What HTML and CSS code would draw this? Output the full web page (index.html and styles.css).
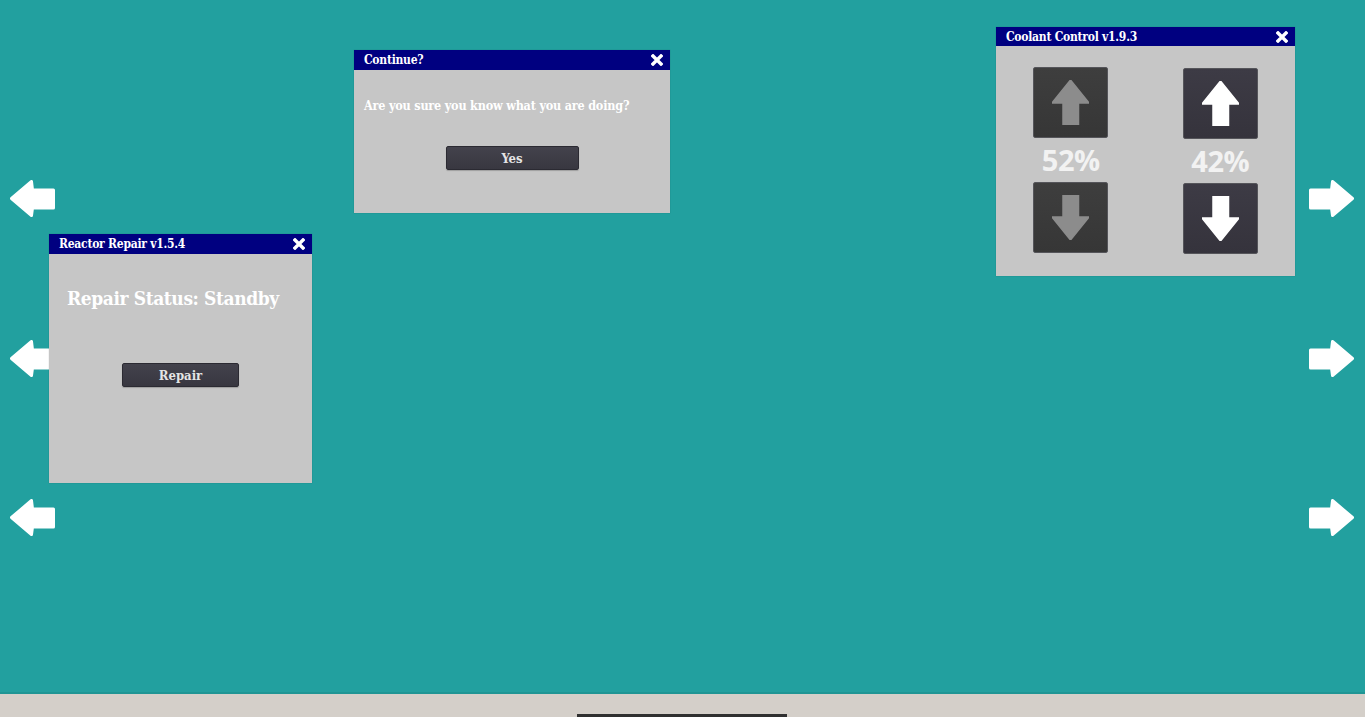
FILE: index.html
```html
<!DOCTYPE html>
<html>
<head>
<meta charset="utf-8">
<link rel="stylesheet" href="styles.css">
</head>
<body>
<div class="desktop">
  <div class="nav nav-left">
    <svg class="nav-arrow" viewBox="0 0 45 37"><path d="M1.5 18.5 L21.5 1.5 L22.5 10 L43.5 10 L43.5 28 L22.5 28 L21.5 35.5 Z"/></svg>
    <svg class="nav-arrow" viewBox="0 0 45 37"><path d="M1.5 18.5 L21.5 1.5 L22.5 10 L43.5 10 L43.5 28 L22.5 28 L21.5 35.5 Z"/></svg>
    <svg class="nav-arrow" viewBox="0 0 45 37"><path d="M1.5 18.5 L21.5 1.5 L22.5 10 L43.5 10 L43.5 28 L22.5 28 L21.5 35.5 Z"/></svg>
  </div>
  <div class="nav nav-right">
    <svg class="nav-arrow" viewBox="0 0 45 37"><path d="M43.5 18.5 L23.5 1.5 L22.5 10 L1.5 10 L1.5 28 L22.5 28 L23.5 35.5 Z"/></svg>
    <svg class="nav-arrow" viewBox="0 0 45 37"><path d="M43.5 18.5 L23.5 1.5 L22.5 10 L1.5 10 L1.5 28 L22.5 28 L23.5 35.5 Z"/></svg>
    <svg class="nav-arrow" viewBox="0 0 45 37"><path d="M43.5 18.5 L23.5 1.5 L22.5 10 L1.5 10 L1.5 28 L22.5 28 L23.5 35.5 Z"/></svg>
  </div>

  <div class="window win-continue">
    <div class="titlebar">
      <span class="title">Continue?</span>
      <svg class="close" viewBox="0 0 12 12"><path d="M2 2 L10 10 M10 2 L2 10"/></svg>
    </div>
    <div class="body body-continue">
      <p class="message">Are you sure you know what you are doing?</p>
      <button class="btn btn-yes">Yes</button>
    </div>
  </div>

  <div class="window win-repair">
    <div class="titlebar">
      <span class="title">Reactor Repair v1.5.4</span>
      <svg class="close" viewBox="0 0 12 12"><path d="M2 2 L10 10 M10 2 L2 10"/></svg>
    </div>
    <div class="body body-repair">
      <h2 class="status">Repair Status: Standby</h2>
      <button class="btn btn-repair">Repair</button>
    </div>
  </div>

  <div class="window win-coolant">
    <div class="titlebar">
      <span class="title">Coolant Control v1.9.3</span>
      <svg class="close" viewBox="0 0 12 12"><path d="M2 2 L10 10 M10 2 L2 10"/></svg>
    </div>
    <div class="body body-coolant">
      <div class="cool-col">
        <button class="cbtn cbtn-dim"><svg viewBox="0 0 37 45"><path d="M18.5 0 L37 23 L26.5 23 L26.5 45 L11 45 L11 23 L0 23 Z"/></svg></button>
        <div class="pct">52%</div>
        <button class="cbtn cbtn-dim"><svg viewBox="0 0 37 45"><path d="M18.5 45 L37 22 L26.5 22 L26.5 0 L11 0 L11 22 L0 22 Z"/></svg></button>
      </div>
      <div class="cool-col cool-col-2">
        <button class="cbtn cbtn-on"><svg viewBox="0 0 37 45"><path d="M18.5 0 L37 23 L26.5 23 L26.5 45 L11 45 L11 23 L0 23 Z"/></svg></button>
        <div class="pct">42%</div>
        <button class="cbtn cbtn-on"><svg viewBox="0 0 37 45"><path d="M18.5 45 L37 22 L26.5 22 L26.5 0 L11 0 L11 22 L0 22 Z"/></svg></button>
      </div>
    </div>
  </div>
</div>
<div class="taskbar">
  <div class="task"></div>
</div>
</body>
</html>
```

FILE: styles.css
```css
* { box-sizing: border-box; }
html, body { margin: 0; padding: 0; }
body {
  width: 1365px;
  height: 717px;
  overflow: hidden;
  background: #d4cfc9;
  font-family: "DejaVu Serif", "Liberation Serif", serif;
  font-stretch: condensed;
}
.desktop {
  position: relative;
  height: 694px;
  background: #22a09f;
  border-bottom: 2px solid #1f9594;
}
.nav {
  position: absolute;
  top: 180px;
  display: flex;
  flex-direction: column;
  gap: 122.5px;
}
.nav-left { left: 10px; }
.nav-right { left: 1309px; }
.nav-arrow {
  width: 45px;
  height: 37px;
  display: block;
}
.nav-arrow path {
  fill: #ffffff;
  stroke: #ffffff;
  stroke-width: 3;
  stroke-linejoin: round;
}
.window {
  position: absolute;
  background: #c6c6c6;
  display: flex;
  flex-direction: column;
  box-shadow: 0 0 1px rgba(0,0,0,0.25);
}
.win-continue { left: 354px; top: 50px; width: 316px; height: 163px; }
.win-repair { left: 49px; top: 234px; width: 263px; height: 249px; }
.win-coolant { left: 996px; top: 27px; width: 299px; height: 249px; }
.titlebar {
  height: 20px;
  flex: none;
  background: #000080;
  display: flex;
  align-items: center;
  justify-content: space-between;
  padding: 0 7px 0 10px;
  color: #ffffff;
}
.win-coolant .titlebar { height: 19px; }
.title {
  font-size: 12px;
  font-weight: bold;
  letter-spacing: -0.25px;
}
.close {
  width: 12px;
  height: 12px;
  display: block;
}
.close path {
  stroke: #ffffff;
  stroke-width: 3.4;
  stroke-linecap: square;
  fill: none;
}
.body { flex: 1; display: flex; flex-direction: column; }
.body-continue {
  padding: 28px 10px 0 10px;
  align-items: stretch;
}
.message {
  margin: 0;
  color: #ffffff;
  font-size: 12.5px;
  font-weight: bold;
  line-height: 16px;
  letter-spacing: -0.2px;
}
.btn {
  font-family: inherit;
  font-stretch: condensed;
  font-weight: bold;
  font-size: 13px;
  color: #e4e4e4;
  background: linear-gradient(#43424c, #383740);
  border: 1px solid #2b2a32;
  border-radius: 2px;
  box-shadow: 0 1px 1px rgba(0,0,0,0.2);
  height: 24px;
  padding: 0;
  margin: 0;
  align-self: center;
}
.btn-yes { width: 133px; margin-top: 32px; }
.body-repair {
  padding: 32px 18px 0 18px;
}
.status {
  margin: 0;
  color: #ffffff;
  font-size: 19px;
  font-weight: bold;
  line-height: 24px;
  letter-spacing: -0.4px;
}
.btn-repair { width: 117px; margin-top: 53px; }
.body-coolant {
  flex-direction: row;
  padding-top: 21px;
}
.cool-col {
  flex: 1;
  display: flex;
  flex-direction: column;
  align-items: center;
}
.cool-col-2 { padding-top: 1px; }
.cbtn {
  width: 75px;
  height: 71px;
  padding: 0;
  margin: 0;
  border: 1px solid #55555a;
  border-radius: 2px;
  display: flex;
  align-items: center;
  justify-content: center;
}
.cbtn svg { width: 37px; height: 45px; display: block; }
.cbtn-dim { background: linear-gradient(#3e3e3e, #363636); }
.cbtn-dim svg path { fill: #8c8c8c; stroke: #8c8c8c; stroke-width: 1.5; stroke-linejoin: round; }
.cbtn-on { background: linear-gradient(#3d3b45, #35333c); }
.cbtn-on svg path { fill: #ffffff; stroke: #ffffff; stroke-width: 1.5; stroke-linejoin: round; }
.pct {
  height: 44px;
  display: flex;
  align-items: center;
  justify-content: center;
  font-family: "Open Sans", "Noto Sans", sans-serif;
  font-stretch: normal;
  font-weight: 700;
  font-size: 29px;
  letter-spacing: -0.5px;
  color: #f2f2f2;
  padding-bottom: 1px;
}
.taskbar {
  height: 23px;
  background: #d4cfc9;
  position: relative;
  display: flex;
  align-items: flex-end;
  padding-left: 577px;
}
.task {
  width: 210px;
  height: 3px;
  background: #2f2f2f;
}
```
